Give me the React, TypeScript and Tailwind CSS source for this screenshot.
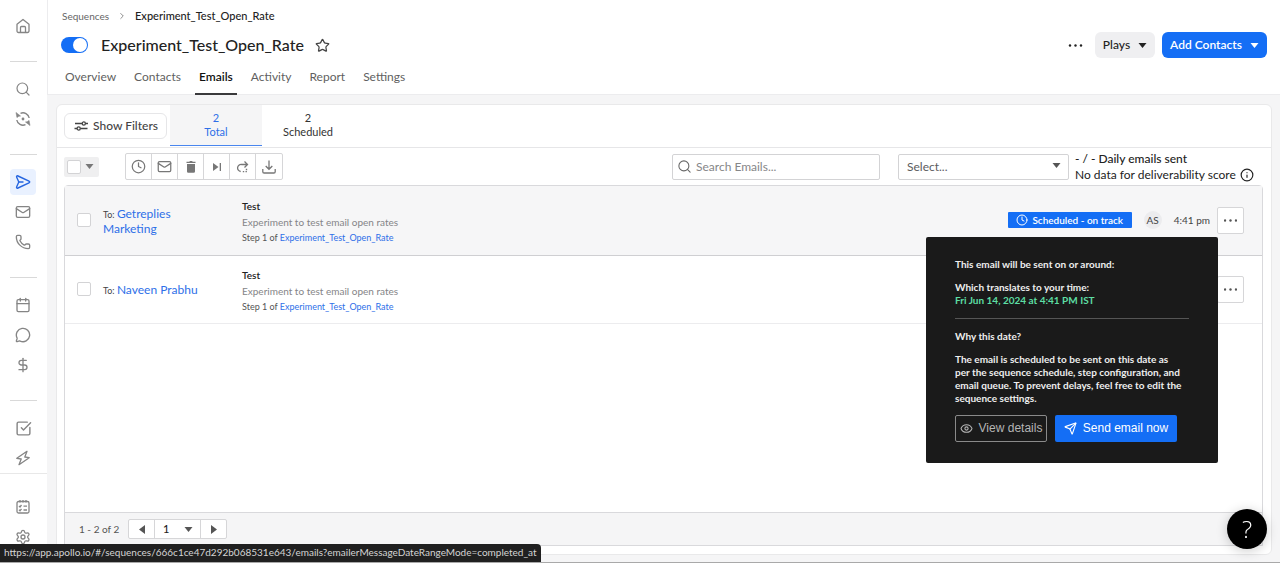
import {
  Search, Send, SendHorizontal, Mail, Phone, Calendar, MessageCircle, DollarSign,
  SquareCheckBig, Zap, Settings, ChevronRight, Star, Clock, Info, Eye
} from "lucide-react";
import type { ReactNode } from "react";

const SEQUENCE = "Experiment_Test_Open_Rate";

const TABS = ["Overview", "Contacts", "Emails", "Activity", "Report", "Settings"];

const EMAILS = [
  { id: 1, to: "Getreplies Marketing", hovered: true },
  { id: 2, to: "Naveen Prabhu", hovered: false },
];

export default function App() {
  return (
    <div className="flex h-screen min-h-[563px] overflow-hidden border-b border-[#a9a9a9] bg-[#f5f5f6] font-['Lato',sans-serif] text-[#222]">
      <Sidebar />

      <div className="flex min-w-0 flex-1 flex-col">
        <Header />

        <main className="mt-[9px] mr-2 mb-[7px] ml-[9px] flex min-h-0 flex-1 flex-col rounded-md border border-[#e9e9ea] bg-white">
          <div className="flex h-[43px] shrink-0 border-b border-[#e6e6e8] pl-[7px]">
            <button className="mt-2 mr-[3px] flex h-[26px] w-[103px] items-center justify-center gap-1 self-start rounded-md border border-[#e6e6e8] text-xs font-medium text-[#444]">
              <FiltersIcon /> Show Filters
            </button>
            <Counter value={2} label="Total" active />
            <Counter value={2} label="Scheduled" />
          </div>

          <Toolbar />

          <div className="mr-2 mb-2 ml-[7px] flex min-h-0 flex-1 flex-col rounded-t border border-[#d9d9dc]">
            <table className="w-full border-collapse">
              <tbody>
                {EMAILS.map((email) => (
                  <EmailRow key={email.id} to={email.to} hovered={email.hovered} />
                ))}
              </tbody>
            </table>
            <Pagination />
          </div>
        </main>
      </div>

      <div className="fixed bottom-px left-0 h-[18px] rounded-tr bg-[#202020] px-1 text-[10px] leading-[17px] text-[#d4d4d4]">
        https://app.apollo.io/#/sequences/666c1ce47d292b068531e643/emails?emailerMessageDateRangeMode=completed_at
      </div>

      <button aria-label="Help" className="fixed right-[13px] bottom-3.5 flex h-10 w-10 items-center justify-center rounded-full bg-black font-['Open_Sans',sans-serif] text-2xl font-light text-white shadow-[0_2px_12px_rgba(0,0,0,0.2)]">
        ?
      </button>
    </div>
  );
}

function Sidebar() {
  return (
    <nav className="flex w-[47px] shrink-0 flex-col bg-white pt-[11px] text-[#858585]">
      <NavItem label="Home"><HomeIcon /></NavItem>
      <Divider />
      <NavItem label="Search"><Search size={16} strokeWidth={1.8} /></NavItem>
      <NavItem label="Enrich"><EnrichIcon /></NavItem>
      <Divider />
      <NavItem label="Sequences" active><SequenceIcon /></NavItem>
      <NavItem label="Emails"><Mail size={16} strokeWidth={2} /></NavItem>
      <NavItem label="Calls"><Phone size={16} strokeWidth={2} /></NavItem>
      <Divider />
      <NavItem label="Meetings"><Calendar size={16} strokeWidth={2} /></NavItem>
      <NavItem label="Conversations"><MessageCircle size={16} strokeWidth={2} /></NavItem>
      <NavItem label="Deals"><DollarSign size={16} strokeWidth={2} /></NavItem>
      <Divider />
      <NavItem label="Tasks"><SquareCheckBig size={17} strokeWidth={2} /></NavItem>
      <NavItem label="Workflows"><BoltIcon /></NavItem>
      <div className="mb-[18px] border-t border-[#e8e8e8]" />
      <NavItem label="Get started"><ChecklistIcon /></NavItem>
      <NavItem label="Settings"><Settings size={16} strokeWidth={2} /></NavItem>
    </nav>
  );
}

function NavItem({ label, active, children }: { label: string; active?: boolean; children: ReactNode }) {
  return (
    <a href="#" aria-label={label} className="flex h-[30px] shrink-0 items-center pl-2.5">
      <span className={active
        ? "flex h-[26px] w-[26px] items-center justify-center rounded bg-[#e9f1ff] text-[#2565e0]"
        : "flex h-[26px] w-[26px] items-center justify-center"}>
        {children}
      </span>
    </a>
  );
}

function Divider() {
  return <div className="mx-2.5 mt-5 mb-3 h-px shrink-0 bg-[#d9d9d9]" />;
}

function Header() {
  return (
    <header className="h-[95px] shrink-0 border-b border-l border-[#ececee] bg-white pt-2 pr-[13px] pl-[13px]">
      <div className="flex h-4 items-center gap-2 text-[11px]">
        <a href="#" className="pl-px text-[10px] text-[#666]">Sequences</a>
        <ChevronRight size={10} className="text-[#777]" />
        <span className="font-medium">{SEQUENCE}</span>
      </div>

      <div className="mt-[7px] flex h-7 items-center">
        <label className="relative flex h-4 w-[27px] shrink-0">
          <input type="checkbox" role="switch" aria-label="Sequence active" defaultChecked className="h-4 w-[27px] appearance-none rounded-full bg-[#146ef5]" />
          <span className="absolute top-px right-px h-3.5 w-3.5 rounded-full bg-white" />
        </label>
        <h1 className="ml-[13px] text-base font-medium">{SEQUENCE}</h1>
        <Star size={15} strokeWidth={2} className="ml-[11px] text-[#444]" />

        <button aria-label="More" className="ml-auto p-1"><Dots wide /></button>
        <button className="ml-2 flex h-[26px] w-[60px] items-center justify-center gap-2 rounded-md bg-[#efeff1] text-xs font-medium">
          Plays <Caret />
        </button>
        <button className="ml-[7px] flex h-[26px] w-[105px] items-center justify-center gap-2 rounded-md bg-[#146ef5] text-xs font-semibold text-white">
          Add Contacts <Caret />
        </button>
      </div>

      <div className="mt-2 flex h-7 gap-2.5 text-xs text-[#5f5f61]">
        {TABS.map((tab) => (
          <a
            key={tab}
            href="#"
            className={tab === "Emails"
              ? "border-b-2 border-[#3a3a3c] px-1 pt-0.5 font-semibold text-[#111]"
              : "px-1 pt-0.5"}
          >
            {tab}
          </a>
        ))}
      </div>
    </header>
  );
}

function Counter({ value, label, active }: { value: number; label: string; active?: boolean }) {
  return (
    <button className={active
      ? "flex h-[41px] w-[92px] flex-col items-center border-b border-[#4a86ee] bg-[#f5f5f6] pt-1.5 text-[11px] leading-[14px] text-[#2e6fe8]"
      : "flex h-[41px] w-[92px] flex-col items-center pt-1.5 text-[11px] leading-[14px] text-[#333]"}>
      <span>{value}</span>
      <span>{label}</span>
    </button>
  );
}

function Toolbar() {
  return (
    <div className="flex h-[37px] shrink-0 items-center pr-[9px] pl-[7px]">
      <label className="flex h-5 w-[35px] items-center gap-1 rounded-xs bg-[#efeff0] pl-[3px] text-[#777]">
        <Checkbox label="Select all" />
        <Caret />
      </label>

      <div className="ml-[26px] flex h-[27px] divide-x divide-[#d6d6d8] rounded-xs border border-[#d6d6d8] text-[#777]">
        <ToolButton label="Reschedule"><Clock size={15} /></ToolButton>
        <ToolButton label="Email"><Mail size={15} /></ToolButton>
        <ToolButton label="Delete"><TrashIcon /></ToolButton>
        <ToolButton label="Skip"><SkipIcon /></ToolButton>
        <ToolButton label="Retry"><RetryIcon /></ToolButton>
        <ToolButton label="Export"><ExportIcon /></ToolButton>
      </div>

      <div className="relative ml-auto">
        <Search size={15} className="absolute top-1.5 left-[5px] text-[#666]" strokeWidth={1.7} />
        <input aria-label="Search emails" placeholder="Search Emails..." className="h-[26px] w-[208px] rounded-xs border border-[#d3d3d5] pl-[23px] text-xs placeholder:text-[#868688]" />
      </div>

      <div className="relative ml-[18px]">
        <select aria-label="Filter" className="h-[26px] w-[171px] appearance-none rounded-xs border border-[#d3d3d5] bg-white pl-2 text-xs text-[#5c5c5e]">
          <option>Select...</option>
        </select>
        <span className="pointer-events-none absolute top-2.5 right-2 text-[#555]"><Caret /></span>
      </div>

      <div className="ml-1.5 w-[187px] text-xs leading-4">
        <p className="font-medium">- / - Daily emails sent</p>
        <p className="flex items-center gap-1 whitespace-nowrap">
          No data for deliverability score <Info size={14} strokeWidth={2} />
        </p>
      </div>
    </div>
  );
}

function ToolButton({ label, children }: { label: string; children: ReactNode }) {
  return (
    <button aria-label={label} className="flex w-[26px] items-center justify-center">{children}</button>
  );
}

function Checkbox({ label }: { label: string }) {
  return (
    <input type="checkbox" aria-label={label} className="block h-3.5 w-3.5 shrink-0 appearance-none rounded-xs border border-[#d3d3d5] bg-white" />
  );
}

function EmailRow({ to, hovered }: { to: string; hovered: boolean }) {
  return (
    <tr className={hovered ? "h-[69px] border-b border-[#cfcfd2] bg-[#f6f6f7]" : "h-[68px] border-b border-[#ececee]"}>
      <td className="w-[38px] pl-3"><Checkbox label={`Select ${to}`} /></td>
      <td className="w-[139px] pt-0.5 pr-9 text-xs leading-[14px] text-[#2e6fe8]">
        <span className="text-[9px] text-[#444]">To: </span>
        <a href="#">{to}</a>
      </td>
      <td className="pt-1 text-[10px] leading-4">
        <p className="font-semibold">Test</p>
        <p className="text-[#858587]">Experiment to test email open rates</p>
        <p className="text-[9px] text-[#555]">
          Step 1 of <a href="#" className="text-[#2e6fe8]">{SEQUENCE}</a>
        </p>
      </td>
      <td className="pr-[18px]">
        <div className="relative flex items-center justify-end">
          {hovered && (
            <>
              <span className="mr-3 flex h-4 w-[124px] items-center justify-center gap-1 rounded-[1px] bg-[#146ef5] text-[10px] font-semibold text-white">
                <Clock size={12} /> Scheduled - on track
              </span>
              <span className="flex h-[18px] w-[18px] items-center justify-center rounded-full bg-[#ececee] text-[10px] text-[#444]">AS</span>
              <span className="mr-[7px] ml-3 text-[10px] text-[#444]">4:41 pm</span>
            </>
          )}
          <button aria-label="Email actions" className="flex h-[27px] w-[27px] items-center justify-center rounded-xs border border-[#d6d6d8] bg-white text-[#555]">
            <Dots wide={false} />
          </button>
          {hovered && <ScheduleTooltip />}
        </div>
      </td>
    </tr>
  );
}

function ScheduleTooltip() {
  return (
    <div role="tooltip" className="absolute top-[30px] right-[26px] z-10 w-[292px] rounded-xs bg-[#1a1a1a] px-[29px] pt-[21px] pb-[21px] text-[10px] leading-[13px] font-bold text-[#eee]">
      <p>This email will be sent on or around:</p>
      <p className="mt-2.5">Which translates to your time:</p>
      <p className="text-[#5ddea3]">Fri Jun 14, 2024 at 4:41 PM IST</p>
      <hr className="my-[11px] border-[#555]" />
      <p>Why this date?</p>
      <p className="mt-2.5 pr-1">
        The email is scheduled to be sent on this date as per the sequence schedule, step configuration, and email queue. To prevent delays, feel free to edit the sequence settings.
      </p>
      <div className="mt-2.5 flex gap-2 font-['Liberation_Sans',sans-serif] text-xs font-normal whitespace-nowrap">
        <button className="flex h-[27px] w-[92px] items-center justify-center gap-1.5 rounded-xs border border-[#8a8a8a] text-[#b5b5b5]">
          <Eye size={13} /> View details
        </button>
        <button className="flex h-[27px] w-[122px] items-center justify-center gap-1.5 rounded-xs bg-[#146ef5] text-white">
          <Send size={13} /> Send email now
        </button>
      </div>
    </div>
  );
}

function Pagination() {
  return (
    <div className="mt-auto flex h-[33px] items-center border-t border-[#d9d9dc] bg-[#f5f5f6] pl-3.5 text-[10px] text-[#555]">
      <span className="w-[49px] whitespace-nowrap">1 - 2 of 2</span>
      <div className="flex h-5 divide-x divide-[#d6d6d8] rounded-xs border border-[#d6d6d8] bg-white">
        <button aria-label="Previous page" className="flex w-[26px] items-center justify-center"><Arrow back /></button>
        <div className="relative">
          <select aria-label="Page" className="h-full w-[45px] appearance-none bg-white pl-2 text-[11px] font-medium text-[#222]">
            <option>1</option>
          </select>
          <span className="pointer-events-none absolute top-[7px] right-[7px]"><Caret /></span>
        </div>
        <button aria-label="Next page" className="flex w-[25px] items-center justify-center"><Arrow back={false} /></button>
      </div>
    </div>
  );
}

/* icons */

function Caret() {
  return (
    <svg width="9" height="5" viewBox="0 0 9 5" fill="currentColor"><path d="M0.5 0h8L4.5 5z" /></svg>
  );
}

function Arrow({ back }: { back: boolean }) {
  return (
    <svg width="6" height="9" viewBox="0 0 6 9" fill="currentColor">
      <path d={back ? "M6 0v9L0 4.5z" : "M0 0v9l6-4.5z"} />
    </svg>
  );
}

function Dots({ wide }: { wide: boolean }) {
  return (
    <svg width={wide ? 15 : 13} height="3" viewBox={wide ? "0 0 15 3" : "1 0 13 3"} fill="currentColor">
      <circle cx="2" cy="1.5" r="1.2" />
      <circle cx="7.5" cy="1.5" r="1.2" />
      <circle cx="13" cy="1.5" r="1.2" />
    </svg>
  );
}

function HomeIcon() {
  return (
    <svg width="16" height="16" viewBox="0 0 16 16" fill="none" stroke="currentColor" strokeWidth="1.3" strokeLinejoin="round">
      <path d="M2 6.3 8 1.5l6 4.8V13a1.5 1.5 0 0 1-1.5 1.5h-9A1.5 1.5 0 0 1 2 13z" />
      <path d="M5.5 14.3V9.5a1 1 0 0 1 1-1h3a1 1 0 0 1 1 1v4.8" />
    </svg>
  );
}

function SequenceIcon() {
  return (
    <svg width="16" height="16" viewBox="0 0 16 16" fill="none" stroke="currentColor" strokeWidth="1.4" strokeLinejoin="round" strokeLinecap="round">
      <path d="M1.700 3.300C1.200 2.200 2 1.500 3 2l11 5.200c.9.400.9 1.200 0 1.600L3 14c-1 .5-1.800-.2-1.300-1.300L3.800 8z" />
      <path d="M3.800 8H8" />
    </svg>
  );
}

function BoltIcon() {
  return (
    <svg width="16" height="16" viewBox="0 0 16 16" fill="none" stroke="currentColor" strokeWidth="1.300" strokeLinejoin="round">
      <path d="M12 1.300 1.800 8.300l4.400.7L4 14.700 14.200 7.700 9.800 7z" />
    </svg>
  );
}

function EnrichIcon() {
  return (
    <svg width="16" height="16" viewBox="0 0 16 16" fill="none" stroke="currentColor" strokeWidth="1.400">
      <path d="M5.500 2.300A6.300 6.300 0 0 1 14.200 7M10.500 13.700A6.300 6.300 0 0 1 1.800 9" />
      <path d="M2 6.500A6 6 0 0 1 3.300 4.200M14 9.500a6 6 0 0 1-1.300 2.300" />
      <path d="M1 1.500 1.800 5.500 5.500 5zM15 14.500l-.8-4-3.700.5z" fill="currentColor" strokeWidth="0.600" />
      <circle cx="8" cy="8" r="1.400" fill="currentColor" stroke="none" />
    </svg>
  );
}

function ChecklistIcon() {
  return (
    <svg width="16" height="16" viewBox="0 0 16 16" fill="none" stroke="currentColor" strokeWidth="1.300">
      <rect x="2" y="2.500" width="12" height="11.500" rx="1.500" />
      <path d="M5 1v2.500M8 1v2.500M11 1v2.500M4 7l1 1 1.500-2M4 10.800l1 1 1.500-2M8.500 7.200H12M8.500 11H12" />
    </svg>
  );
}

function FiltersIcon() {
  return (
    <svg width="16" height="16" viewBox="0 0 16 16" fill="none" stroke="currentColor" strokeWidth="1.300">
      <path d="M2 5.500h7M12.500 5.500H15M1.500 10.500h2.500M7.500 10.500H14.500" />
      <circle cx="10.800" cy="5.500" r="1.600" />
      <circle cx="5.700" cy="10.500" r="1.600" />
    </svg>
  );
}

function TrashIcon() {
  return (
    <svg width="12" height="14" viewBox="0 0 12 14" fill="currentColor">
      <path d="M1.500 1.800h2.700L5 1h2l.8.8h2.700V3h-9zM2 4h8v7.500a1.300 1.300 0 0 1-1.300 1.300H3.300A1.300 1.300 0 0 1 2 11.500z" />
    </svg>
  );
}

function SkipIcon() {
  return (
    <svg width="10" height="10" viewBox="0 0 10 10" fill="currentColor">
      <path d="M1 1v8l5.500-4zM7.700 1H9v8H7.700z" />
    </svg>
  );
}

function RetryIcon() {
  return (
    <svg width="14" height="14" viewBox="0 0 14 14" fill="none" stroke="currentColor" strokeWidth="1.300">
      <path d="M11.300 4.500H5.500a3.500 3.500 0 0 0-.8 7M8.500 1.500l3 3-3 3" />
      <path d="M6.800 11.700h1.400M9.500 11.700h1.400M9.800 9.500h1.400" />
    </svg>
  );
}

function ExportIcon() {
  return (
    <svg width="16" height="16" viewBox="0 0 16 16" fill="none" stroke="currentColor" strokeWidth="1.300">
      <path d="M8 1.500V10M4.700 7 8 10.300 11.300 7M1.800 10v2.700a1.300 1.300 0 0 0 1.300 1.300h9.800a1.300 1.300 0 0 0 1.300-1.300V10" />
    </svg>
  );
}
